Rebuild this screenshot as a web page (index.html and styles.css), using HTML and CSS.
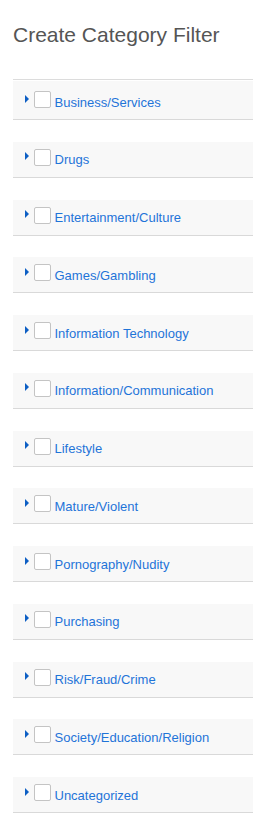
FILE: index.html
```html
<!DOCTYPE html>
<html lang="en">
<head>
<meta charset="utf-8">
<title>Create Category Filter</title>
<link rel="stylesheet" href="styles.css">
</head>
<body>
<div class="page">
  <h1 class="title">Create Category Filter</h1>
  <div class="rule"></div>
  <ul class="cats">
    <li class="cat first"><span class="caret"></span><span class="box"></span><a class="name" href="#">Business/Services</a></li>
    <li class="cat"><span class="caret"></span><span class="box"></span><a class="name" href="#">Drugs</a></li>
    <li class="cat"><span class="caret"></span><span class="box"></span><a class="name" href="#">Entertainment/Culture</a></li>
    <li class="cat"><span class="caret"></span><span class="box"></span><a class="name" href="#">Games/Gambling</a></li>
    <li class="cat"><span class="caret"></span><span class="box"></span><a class="name" href="#">Information Technology</a></li>
    <li class="cat"><span class="caret"></span><span class="box"></span><a class="name" href="#">Information/Communication</a></li>
    <li class="cat"><span class="caret"></span><span class="box"></span><a class="name" href="#">Lifestyle</a></li>
    <li class="cat"><span class="caret"></span><span class="box"></span><a class="name" href="#">Mature/Violent</a></li>
    <li class="cat"><span class="caret"></span><span class="box"></span><a class="name" href="#">Pornography/Nudity</a></li>
    <li class="cat"><span class="caret"></span><span class="box"></span><a class="name" href="#">Purchasing</a></li>
    <li class="cat"><span class="caret"></span><span class="box"></span><a class="name" href="#">Risk/Fraud/Crime</a></li>
    <li class="cat"><span class="caret"></span><span class="box"></span><a class="name" href="#">Society/Education/Religion</a></li>
    <li class="cat"><span class="caret"></span><span class="box"></span><a class="name" href="#">Uncategorized</a></li>
  </ul>
</div>
</body>
</html>
```
FILE: styles.css
```css
html, body {
  margin: 0;
  padding: 0;
  background: #fff;
  overflow: hidden;
}
.page {
  padding-left: 13px;
  font-family: "Liberation Sans", Arial, sans-serif;
}
.title {
  margin: 23px 0 0 0;
  font-size: 21px;
  line-height: 24px;
  font-weight: normal;
  color: #555;
  white-space: nowrap;
}
.rule {
  margin-top: 32px;
  height: 1px;
  background: #dcdcdc;
}
.cats {
  list-style: none;
  margin: 1px 0 0 0;
  padding: 0;
}
.cat {
  display: flex;
  align-items: center;
  height: 31px;
  padding: 0 0 4px 12px;
  background: #f8f8f8;
  border-bottom: 1px solid #d9d9d9;
  margin-top: 21.75px;
}
.cat.first {
  margin-top: 0;
  height: 37px;
  padding-bottom: 1px;
}
.caret {
  width: 0;
  height: 0;
  border-top: 4px solid transparent;
  border-bottom: 4px solid transparent;
  border-left: 4.5px solid #0d5fc4;
  margin-right: 4.5px;
  margin-top: -2px;
}
.box {
  width: 17px;
  height: 17px;
  box-sizing: border-box;
  border: 1px solid #c4c4c4;
  border-radius: 2px;
  background: #fff;
  margin-right: 4px;
}
.name {
  font-size: 13px;
  color: #1f74d8;
  text-decoration: none;
  white-space: nowrap;
  margin-top: 5px;
}
```
